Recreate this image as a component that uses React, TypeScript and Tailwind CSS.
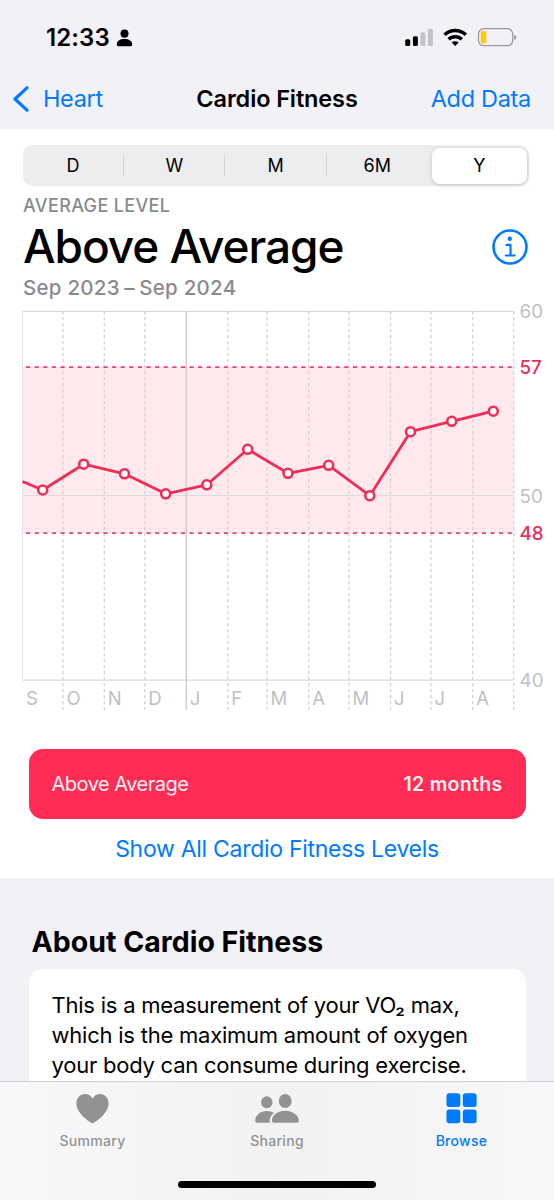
import type { ReactNode } from 'react';

const ranges = ['D', 'W', 'M', '6M', 'Y'];

const months = [
  { label: 'S', x: 22.5 },
  { label: 'O', x: 63 },
  { label: 'N', x: 104.3 },
  { label: 'D', x: 144.8 },
  { label: 'J', x: 186.2, newYear: true },
  { label: 'F', x: 227.8 },
  { label: 'M', x: 267 },
  { label: 'A', x: 308.7 },
  { label: 'M', x: 349 },
  { label: 'J', x: 390.5 },
  { label: 'J', x: 431 },
  { label: 'A', x: 472.7 },
];

const points = [
  [42.7, 192],
  [83.7, 166.2],
  [124.5, 175.8],
  [165.7, 195.8],
  [206.8, 186.8],
  [247.7, 151.3],
  [288, 175.3],
  [328.7, 167.3],
  [369.8, 197.7],
  [410.5, 133.7],
  [451.7, 123.3],
  [493.3, 113.2],
];

function StatusBar() {
  return (
    <div className="flex h-[35px] items-center justify-between pl-[46px] pr-[37px]">
      <div className="flex items-center gap-[6px]">
        <span className="text-[24px] font-semibold leading-[35px] tracking-[0.1px]">12:33</span>
        <svg width="17" height="18" viewBox="0 0 17 18" fill="black">
          <ellipse cx="8.5" cy="4.6" rx="4" ry="4.2" />
          <path d="M.8 15.6C.8 12 4 10.1 8.5 10.1s7.7 1.9 7.7 5.5c0 1.2-.5 1.6-1.5 1.6H2.3c-1 0-1.5-.4-1.5-1.6Z" />
        </svg>
      </div>
      <svg width="112" height="20" viewBox="405 27.5 112 20">
        <rect x="405.2" y="38.8" width="5" height="6.7" rx="1.5" />
        <rect x="412.9" y="35.7" width="5" height="9.8" rx="1.5" />
        <rect x="420.4" y="31.8" width="5" height="13.7" rx="1.5" fill="#c3c3c7" />
        <rect x="427.9" y="28.2" width="5" height="17.3" rx="1.5" fill="#c3c3c7" />
        <g fill="none" stroke="black" strokeWidth="3.5">
          <path d="M444.6 34.3a15.3 15.3 0 0 1 21.2 0" />
          <path d="M448.6 38.8a9.5 9.5 0 0 1 13.2 0" />
        </g>
        <path d="M455.2 45.6l-3.5-3.5a5 5 0 0 1 7 0Z" />
        <rect x="478.5" y="28.2" width="34.2" height="17" rx="5.2" fill="none" stroke="#9a9a9f" strokeWidth="1.3" />
        <rect x="480.7" y="30.6" width="5.6" height="12.3" rx="2" fill="#ffcc00" />
        <path d="M514.3 34.2c2.4.8 2.4 4.6 0 5.4Z" fill="#8c8c91" />
      </svg>
    </div>
  );
}

function NavBar() {
  return (
    <div className="mt-[13px] grid h-[61px] grid-cols-[1fr_auto_1fr] items-center px-3 text-[23.5px]">
      <div className="flex items-center gap-[13px] text-[#007aff]">
        <svg width="18" height="28" viewBox="0 0 18 28" fill="none" stroke="currentColor" strokeWidth="3.2" strokeLinecap="round" strokeLinejoin="round">
          <path d="M15 2.8 3 14l12 11.2" />
        </svg>
        <span className="tracking-[-0.35px]">Heart</span>
      </div>
      <h1 className="font-semibold tracking-[-0.12px]">Cardio Fitness</h1>
      <span className="pr-[11px] text-right tracking-[-0.3px] text-[#007aff]">Add Data</span>
    </div>
  );
}

function RangePicker() {
  return (
    <div className="ml-[23px] flex h-[41px] w-[506px] rounded-[10px] bg-[#ededef] text-[18px]">
      {ranges.map((range, index) => (
        <div key={range} className="flex flex-1 items-center">
          {range === 'Y' ? (
            <div className="ml-[4px] mr-[2px] flex h-[36px] flex-1 items-center justify-center rounded-[8px] bg-white shadow-[0_1px_4px_rgba(0,0,0,0.18)]">
              {range}
            </div>
          ) : (
            <>
              <span className="flex-1 text-center">{range}</span>
              {index < 3 && <span className="h-[21px] w-px bg-[#d2d2d5]" />}
            </>
          )}
        </div>
      ))}
    </div>
  );
}

function Summary() {
  return (
    <div className="flex items-center justify-between pl-[23px] pr-[26px] pt-[10px] font-medium">
      <div>
        <div className="text-[18px] leading-[20px] tracking-[0.35px] text-[#8a8a8e]">AVERAGE LEVEL</div>
        <div className="text-[46px] leading-[60px] tracking-[-1.05px]">Above Average</div>
        <div className="text-[20.5px] leading-[24px] tracking-[0.25px] text-[#8a8a8e]">
          Sep 2023<span className="mx-[4.5px]">–</span>Sep 2024
        </div>
      </div>
      <svg className="mb-[2px]" width="36" height="36" viewBox="0 0 36 36" fill="none" stroke="#007aff">
        <circle cx="18" cy="18" r="16.5" strokeWidth="2.6" />
        <circle cx="17.8" cy="9.7" r="2.2" fill="#007aff" stroke="none" />
        <path d="M14.5 15.8h4v10.5M13.8 26.5h8.8" strokeWidth="2.2" strokeLinecap="round" strokeLinejoin="round" />
      </svg>
    </div>
  );
}

function FitnessChart() {
  const line = [[22.5, 183.5], ...points].map((p) => p.join(',')).join(' ');

  return (
    <svg width="554" height="418" viewBox="0 2 554 418" className="block font-['Inter',sans-serif]">
      <rect x="22.5" y="69" width="491" height="166" fill="#feeaec" />

      {/* value grid */}
      <g stroke="#d9d9dc" strokeWidth="1.2">
        <path d="M22.5 13.4H513.5M22.5 197.5H513.5" stroke="#dfdadd" />
        <path d="M22.5 382.2H513.5" />
        <path d="M22.5 13V382" stroke="#e6e6e9" />
      </g>

      {/* month grid */}
      {months.slice(1).map((month) => (
        <path
          key={month.x}
          d={`M${month.x} 13V412`}
          stroke={month.newYear ? '#ccc8cc' : '#d6d1d5'}
          strokeWidth="1.3"
          strokeDasharray={month.newYear ? undefined : '3.2 2.8'}
        />
      ))}
      <path d="M513.7 13V412" stroke="#d6d1d5" strokeWidth="1.3" strokeDasharray="3.2 2.8" />

      {/* level limits */}
      <g stroke="#e94470" strokeWidth="1.8" strokeDasharray="4.2 4.4">
        <path d="M26 69.2H514" />
        <path d="M26 235.1H514" />
      </g>

      <polyline points={line} fill="none" stroke="#f02d58" strokeWidth="2.8" strokeLinejoin="round" />
      {points.map(([x, y]) => (
        <circle key={x} cx={x} cy={y} r="4.5" fill="white" stroke="#f02d58" strokeWidth="2.6" />
      ))}

      <g fontSize="18.8" fill="#bfbfc3">
        <text x="519.5" y="20.2">60</text>
        <text x="519.5" y="204.6">50</text>
        <text x="519.5" y="389">40</text>
      </g>
      <g fontSize="18.8" fontWeight="500" fill="#e6305c">
        <text x="519.5" y="75.8">57</text>
        <text x="519.5" y="241.8">48</text>
      </g>
      <g fontSize="18.5" fill="#bfbfc3">
        {months.map((month) => (
          <text key={month.x} x={month.x + 3.5} y="407.2">
            {month.label}
          </text>
        ))}
      </g>
    </svg>
  );
}

function Tab({ label, active, children }: { label: string; active?: boolean; children: ReactNode }) {
  return (
    <div className={`flex w-[184.5px] flex-col items-center ${active ? 'text-[#007aff]' : 'text-[#929292]'}`}>
      <svg width="46" height="34" viewBox="0 0 46 34" fill="currentColor">
        {children}
      </svg>
      <span className="mt-[5px] text-[14px] font-medium leading-[20px] tracking-[0.3px]">{label}</span>
    </div>
  );
}

function TabBar() {
  return (
    <div className="flex h-[119px] flex-col items-center border-t border-[#d0d0d4] bg-linear-to-r from-[#f8f8fb] via-[#f2f2f2] to-[#f8f8fb]">
      <div className="flex pt-[10px]">
        <Tab label="Summary">
          <path d="M22.5 31.5C18 29 6.4 21 6.4 11.5c0-5.500 3.700-9.400 8.600-9.400 3.400 0 6.100 1.800 7.500 4.500 1.400-2.700 4.100-4.500 7.500-4.500 4.900 0 8.600 3.900 8.600 9.400C38.600 21 27 29 22.500 31.500Z" />
        </Tab>
        <Tab label="Sharing">
          <ellipse cx="12.800" cy="10.2" rx="5.7" ry="6" />
          <path d="M16.3 30.7H3.4c-1.5 0-2.2-.7-2.2-2.2 0-5.2 5.4-9.4 11.6-9.400 2.600 0 5 .7 7 1.900-2.800 2.300-4.200 5-4.200 7.800 0 .8.2 1.500.7 1.900Z" />
          <ellipse cx="31.2" cy="9" rx="6.4" ry="7" />
          <path d="M31.2 18.800c7.500 0 13.500 4.500 13.500 9.700 0 1.500-.8 2.200-2.300 2.200H20.200c-1.500 0-2.300-.7-2.300-2.200 0-5.200 5.800-9.700 13.300-9.700Z" />
        </Tab>
        <Tab label="Browse" active>
          <rect x="7.5" y="1.2" width="13.8" height="13.8" rx="2.8" />
          <rect x="23.8" y="1.2" width="13.8" height="13.8" rx="2.8" />
          <rect x="7.5" y="17.5" width="13.8" height="13.8" rx="2.8" />
          <rect x="23.8" y="17.5" width="13.8" height="13.8" rx="2.8" />
        </Tab>
      </div>
      <div className="mt-[30px] h-[7px] w-[198px] rounded-full bg-black" />
    </div>
  );
}

export default function App() {
  return (
    <div className="flex h-[1200px] w-[554px] flex-col overflow-hidden bg-[#f2f1f7] font-['Inter',sans-serif] text-black">
      <header className="h-[129px] shrink-0 pt-5">
        <StatusBar />
        <NavBar />
      </header>

      <section className="h-[749px] shrink-0 bg-white pt-4">
        <RangePicker />
        <Summary />
        <FitnessChart />
        <div className="mx-[28.5px] mt-[31px] flex h-[70px] items-center justify-between rounded-[14px] bg-[#ff2d55] px-[23px] text-[20px] text-[#fff0f2]">
          <span className="tracking-[-0.5px]">Above Average</span>
          <span className="pt-px text-[19.5px] font-semibold tracking-[0.3px]">12 months</span>
        </div>
        <div className="flex h-[59px] items-center justify-center pt-[2px] text-[23px] tracking-[-0.29px] text-[#007aff]">
          Show All Cardio Fitness Levels
        </div>
      </section>

      <section className="min-h-0 flex-1 overflow-hidden px-[28.5px] pt-[45px]">
        <h2 className="ml-[3px] text-[28.5px] font-bold leading-[38px]">About Cardio Fitness</h2>
        <div className="mt-2 h-[160px] rounded-[14px] bg-white px-[23px] pt-[21px]">
          <p className="whitespace-nowrap text-[22px] leading-[30px] tracking-[-0.23px]">
            This is a measurement of your VO₂ max,
            <br />
            which is the maximum amount of oxygen
            <br />
            your body can consume during exercise.
          </p>
        </div>
      </section>

      <TabBar />
    </div>
  );
}
